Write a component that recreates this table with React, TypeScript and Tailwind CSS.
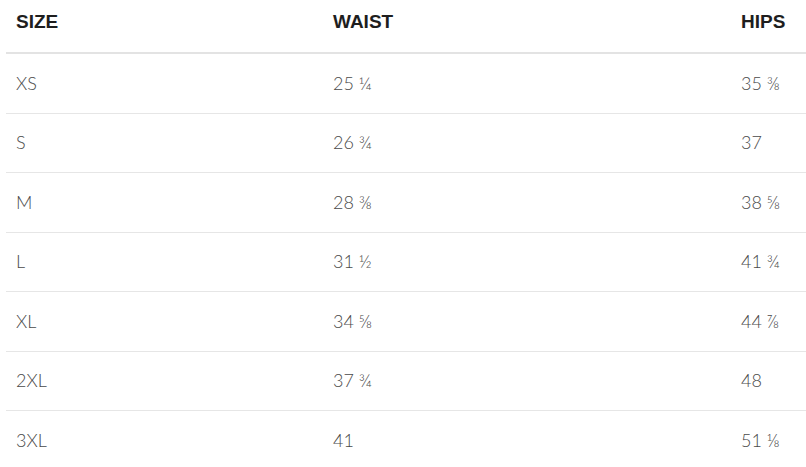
const rows = [
  ["XS", "25 ¼", "35 ⅜"],
  ["S", "26 ¾", "37"],
  ["M", "28 ⅜", "38 ⅝"],
  ["L", "31 ½", "41 ¾"],
  ["XL", "34 ⅝", "44 ⅞"],
  ["2XL", "37 ¾", "48"],
  ["3XL", "41", "51 ⅛"],
];

export default function App() {
  return (
    <div className="min-h-screen bg-white overflow-hidden">
      <div className="ml-[6px] w-[820px]">
        {/* Header */}
        <div className="grid grid-cols-[317px_408px_1fr] h-[54px] border-b-2 border-[#e3e3e3] pt-[12px] font-['Liberation_Sans',sans-serif] text-[19px] leading-[20px] font-bold text-[#1e1e1e]">
          <div className="pl-[10px]">SIZE</div>
          <div className="pl-[10px]">WAIST</div>
          <div className="pl-[10px]">HIPS</div>
        </div>

        {rows.map(([size, waist, hips]) => (
          <div
            key={size}
            className="grid grid-cols-[317px_408px_1fr] items-center h-[59.5px] border-b border-[#e6e6e6] font-['Lato',sans-serif] text-[18px] font-light text-[#4a4a4a]"
          >
            <div className="pl-[10px]">{size}</div>
            <div className="pl-[10px]">{waist}</div>
            <div className="pl-[10px]">{hips}</div>
          </div>
        ))}
      </div>
    </div>
  );
}
